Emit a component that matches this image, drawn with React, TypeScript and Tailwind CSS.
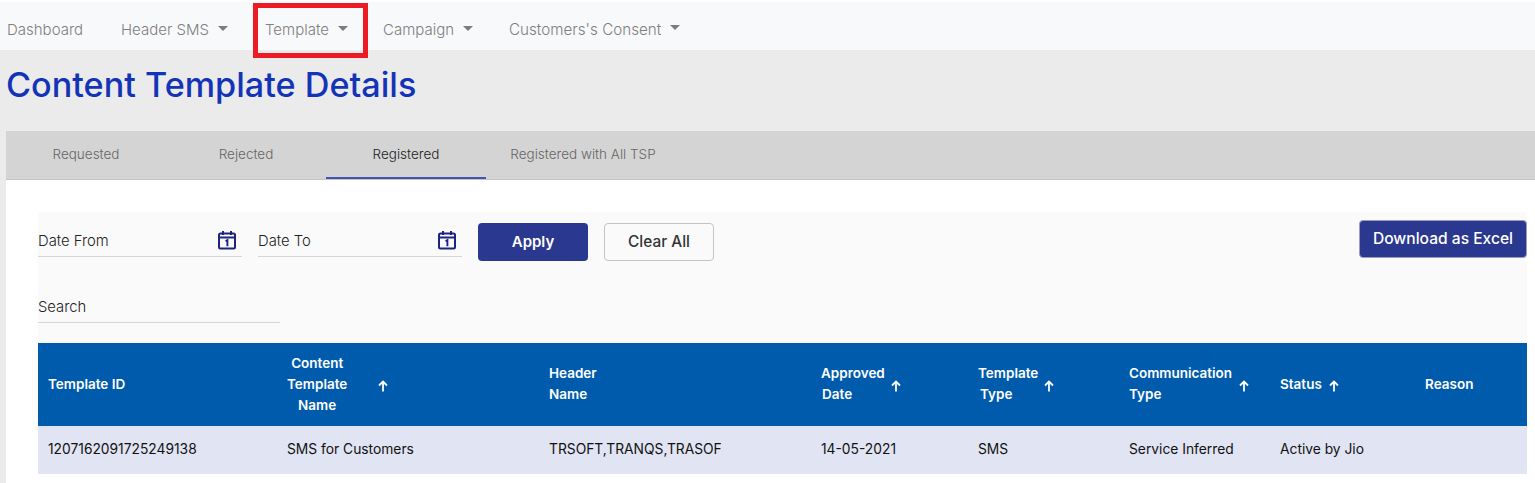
import type { ReactNode } from 'react'

const font = { fontFamily: 'Inter' }

function Caret() {
  return <span className="ml-[9px] mb-[4px] h-0 w-0 border-x-[5px] border-t-[5px] border-x-transparent border-t-[#7d7d7d]" />
}

function NavItem({ label, caret = true, className = 'text-[15px]' }: { label: string; caret?: boolean; className?: string }) {
  return (
    <div className={`flex items-center font-light text-[#7f7f7f] ${className}`}>
      {label}
      {caret && <Caret />}
    </div>
  )
}

function CalendarIcon() {
  return (
    <svg width="20" height="20" viewBox="0 0 20 20" fill="none" stroke="#1b2480" strokeWidth="2">
      <rect x="2" y="3.5" width="16" height="15" rx="1.5" />
      <path d="M2 7.5h16M6 1v4M14 1v4" />
      <path d="M8.6 11.2l1.8-1v6" strokeWidth="1.9" />
    </svg>
  )
}

function SortArrow({ className = '' }: { className?: string }) {
  return (
    <svg width="10" height="12" viewBox="0 0 10 12" fill="none" stroke="#fff" strokeWidth="1.8" className={`mt-[4px] ${className}`}>
      <path d="M5 11.5V1.5M1 5.5l4-4 4 4" />
    </svg>
  )
}

function DateField({ label }: { label: string }) {
  return (
    <div className="flex h-[34px] w-[204px] items-center justify-between border-b border-[#d6d6d6] pr-[5px] text-[14.8px] font-light text-[#222]">
      <span className="pt-[3px]">{label}</span>
      <CalendarIcon />
    </div>
  )
}

function Th({ children, width, arrow }: { children: ReactNode; width: string; arrow?: ReactNode }) {
  return (
    <div className={`flex items-center pb-[1px] pl-[10px] text-[13.5px] font-semibold leading-[21px] text-white ${width}`}>
      {children}
      {arrow}
    </div>
  )
}

const row = [
  ['w-[239px]', '1207162091725249138'],
  ['w-[262px]', 'SMS for Customers'],
  ['w-[272px]', 'TRSOFT,TRANQS,TRASOF'],
  ['w-[157px]', '14-05-2021'],
  ['w-[151px]', 'SMS'],
  ['w-[151px]', 'Service Inferred'],
  ['w-[145px]', 'Active by Jio'],
  ['w-[112px]', ''],
]

export default function App() {
  return (
    <div className="relative h-[483px] w-[1535px] overflow-hidden bg-[#ebebeb]" style={font}>
      <nav className="flex h-[50px] items-center border-t-2 border-white bg-[#f8f9fa] pl-[7px] pt-[8px]">
        <NavItem label="Dashboard" caret={false} className="w-[114px] text-[15px]" />
        <NavItem label="Header SMS" className="w-[144px] text-[15px]" />
        <NavItem label="Template" className="w-[118px] text-[15px]" />
        <NavItem label="Campaign" className="w-[126px] text-[15px]" />
        <NavItem label="Customers's Consent" className="text-[15.2px]" />
      </nav>
      <div className="absolute left-[253px] top-[3px] h-[55px] w-[115px] border-[5px] border-[#ed1c24]" />

      <h1 className="h-[81px] pl-[6px] pt-[13px] text-[34.2px] leading-[44px] font-medium text-[#1434b8]">
        Content Template Details
      </h1>

      <div className="ml-[6px] bg-white">
        <div className="flex h-[49px] border-b border-[#c4c4c4] bg-[#d4d4d4] pb-[1px] text-[13.5px] font-light text-[#666]">
          <div className="flex w-[160px] items-center justify-center">Requested</div>
          <div className="flex w-[160px] items-center justify-center">Rejected</div>
          <div className="-mb-[1px] flex w-[160px] items-center justify-center border-b-2 border-[#4353b5] text-[#222]">Registered</div>
          <div className="flex w-[194px] items-center justify-center">Registered with All TSP</div>
        </div>

        <div className="pt-[32px] pl-[32px] pr-[8px] pb-[20px]">
          <div className="h-[131px] bg-[#fafafa]">
            <div className="flex justify-between pt-[11px]">
              <div className="flex items-start gap-4">
                <DateField label="Date From" />
                <DateField label="Date To" />
                <button className="h-[38px] w-[110px] rounded-[4px] bg-[#2b388f] text-[15px] font-semibold text-white">Apply</button>
                <button className="h-[38px] w-[110px] rounded-[4px] border border-[#c4c4c4] text-[15.4px] font-medium text-[#333]">Clear All</button>
              </div>
              <button className="-mt-[3px] h-[38px] w-[168px] rounded-[4px] border border-[#9a9fc0] bg-[#2b388f] text-[15.6px] font-medium text-white">Download as Excel</button>
            </div>
            <div className="mt-[28px] flex h-[34px] w-[242px] items-center border-b border-[#d6d6d6] pt-[3px] text-[14.8px] font-light text-[#222]">Search</div>
          </div>

          <div className="flex h-[83px] bg-[#005bac]">
            <Th width="w-[239px]">Template ID</Th>
            <Th width="w-[262px]" arrow={<SortArrow className="ml-[31px]" />}>
              <span className="text-center">Content<br />Template<br />Name</span>
            </Th>
            <Th width="w-[272px]"><span>Header<br />Name</span></Th>
            <Th width="w-[157px]" arrow={<SortArrow className="ml-[6px]" />}>
              <span>Approved<br /><span className="pl-[1px]">Date</span></span>
            </Th>
            <Th width="w-[151px]" arrow={<SortArrow className="ml-[6px]" />}>
              <span>Template<br /><span className="pl-[2px]">Type</span></span>
            </Th>
            <Th width="w-[151px]" arrow={<SortArrow className="ml-[7px]" />}>
              <span>Communication<br />Type</span>
            </Th>
            <Th width="w-[145px]" arrow={<SortArrow className="ml-[7px]" />}>Status</Th>
            <Th width="w-[112px]">Reason</Th>
          </div>
          <div className="flex h-[48px] bg-[#e1e4f3] pb-[1px]">
            {row.map(([width, text], i) => (
              <div key={i} className={`flex items-center pl-[10px] text-[13.8px] text-[#111] ${width}`}>{text}</div>
            ))}
          </div>
        </div>
      </div>
    </div>
  )
}
